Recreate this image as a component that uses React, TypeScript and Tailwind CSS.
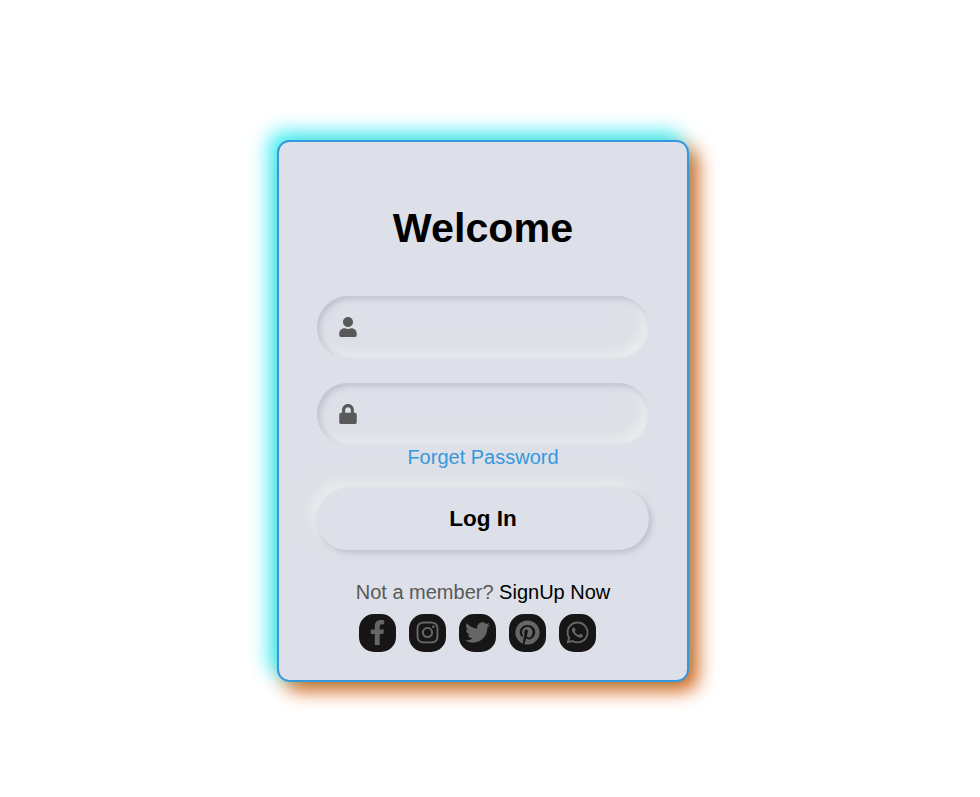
import { FaUser, FaLock, FaFacebookF, FaInstagram, FaTwitter, FaPinterest, FaWhatsapp } from "react-icons/fa";

const socials = [FaFacebookF, FaInstagram, FaTwitter, FaPinterest, FaWhatsapp];

function Field({ icon: Icon, type, label }: { icon: typeof FaUser; type: string; label: string }) {
  return (
    <label className="flex h-[62.5px] w-[332.5px] items-center rounded-full pl-[22px] text-[#595959] shadow-[inset_2.5px_2.5px_6px_#babecc,inset_-6px_-6px_12px_#ffffff60,inset_-8px_-8px_20px_#dfe3e3b0]">
      <Icon size={20} className="w-[18px] shrink-0" />
      <input type={type} aria-label={label} className="ml-4 w-[250px] bg-transparent text-xl outline-none" />
    </label>
  );
}

export default function App() {
  return (
    <main className="flex h-[797px] w-[980px] justify-center bg-white pt-[140px] pr-[14px] font-['Liberation_Sans',Arial,sans-serif]">
      <section className="flex h-[542px] w-[412px] flex-col items-center rounded-[12.5px] border-2 border-[#3498db] bg-[#dde0e8] shadow-[-7.5px_-7.5px_18.75px_#00ecfac0,8px_8px_18.75px_#d85600]">
        <h1 className="mt-[61px] text-[41.25px] leading-[50px] font-semibold text-black">Welcome</h1>
        <div className="mt-[43px] flex flex-col gap-6">
          <Field icon={FaUser} type="text" label="Username" />
          <Field icon={FaLock} type="password" label="Password" />
        </div>
        <a href="#" className="text-xl leading-[24px] text-[#3498db]">Forget Password</a>
        <button className="mt-[19px] h-[62px] w-[332.5px] rounded-full bg-[#dde0e8] text-[22.5px] font-semibold text-black shadow-[2.5px_2.5px_6px_#babecc,-6px_-6px_12px_#ffffff60,-8px_-8px_20px_#dfe3e3b0]">
          Log In
        </button>
        <p className="mt-[30px] text-xl leading-6 text-[#595959]">
          Not a member? <a href="#" className="text-black">SignUp Now</a>
        </p>
        <div className="mt-[10px] mr-[11px] flex gap-[13px]">
          {socials.map((Icon, i) => (
            <a key={i} href="#" className="flex h-[38px] w-[37px] items-center justify-center rounded-[15px] bg-[#171515] pb-[2px] text-[#666666]">
              <Icon size={25} />
            </a>
          ))}
        </div>
      </section>
    </main>
  );
}
